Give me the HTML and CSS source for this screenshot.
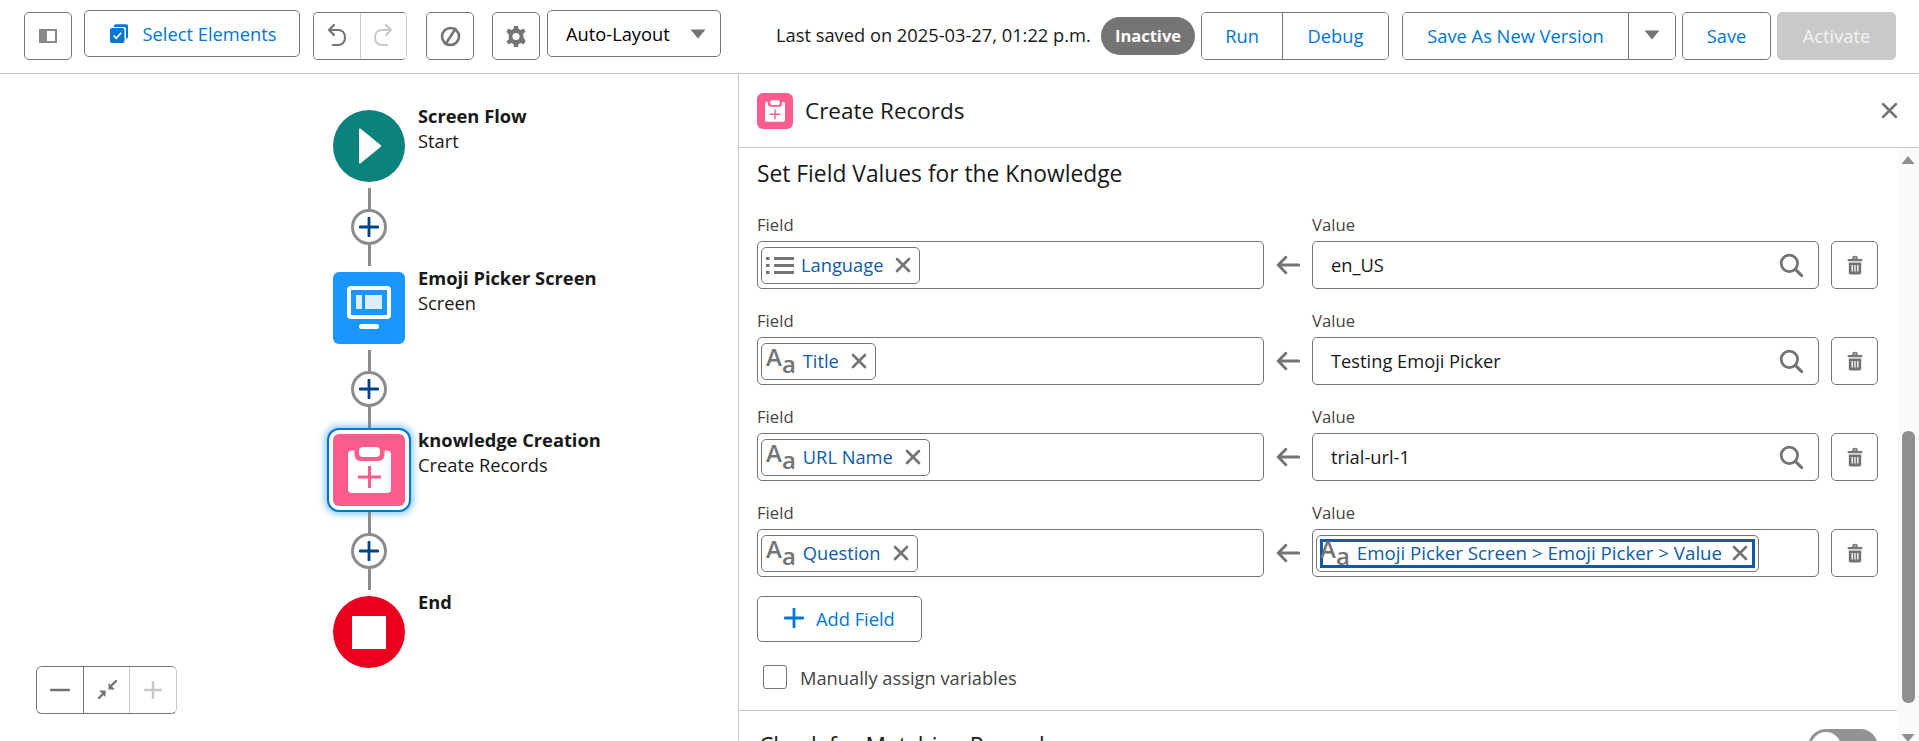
FILE: index.html
```html
<!DOCTYPE html>
<html lang="en">
<head>
    <meta charset="UTF-8">
    <title>Flow Builder - Create Records</title>
    <link rel="stylesheet" href="styles.css">
</head>
<body>
    <!-- shared icons -->
    <svg class="defs" width="0" height="0">
        <symbol id="i-x" viewBox="0 0 16 16"><path d="M2 2l12 12M14 2L2 14" fill="none" stroke="currentColor" stroke-width="2.6" stroke-linecap="round"/></symbol>
        <symbol id="i-caret" viewBox="0 0 16 10"><path d="M0.5 0.5h15L8 9.5z" fill="currentColor"/></symbol>
        <symbol id="i-plus" viewBox="0 0 20 20"><path d="M10 1v18M1 10h18" fill="none" stroke="currentColor" stroke-width="2.8" stroke-linecap="round"/></symbol>
        <symbol id="i-arrow" viewBox="0 0 22 18"><path d="M21 9H2M9 2L2 9l7 7" fill="none" stroke="currentColor" stroke-width="2.6" stroke-linecap="round" stroke-linejoin="round"/></symbol>
        <symbol id="i-search" viewBox="0 0 22 22"><circle cx="9.5" cy="9.5" r="7.5" fill="none" stroke="currentColor" stroke-width="2.6"/><path d="M15 15l6 6" stroke="currentColor" stroke-width="2.8" stroke-linecap="round"/></symbol>
        <symbol id="i-trash" viewBox="0 0 16 20"><path d="M6 2.5C6 1.2 10 1.2 10 2.5V4H6z" fill="none" stroke="currentColor" stroke-width="1.5"/><rect x="0.5" y="4" width="15" height="2.2" rx="1" fill="currentColor"/><path d="M1.8 7.5h12.4v10.3c0 1-.8 1.7-1.7 1.7h-9c-.9 0-1.7-.7-1.7-1.7z" fill="currentColor"/><path d="M5.2 10v6.5M8 10v6.5M10.8 10v6.5" stroke="#fff" stroke-width="1.3"/></symbol>
        <symbol id="i-clip" viewBox="0 0 43 46"><rect y="3.500" width="43" height="42.500" rx="4" fill="#fff"/><rect x="6.500" y="-4" width="30" height="18" rx="6" fill="#fe5c8c"/><rect x="11" y="0" width="21" height="10" rx="4" fill="#fff"/><path d="M21.500 19v22M10 30h23" stroke="#fe5c8c" stroke-width="3"/></symbol>
    </svg>

    <header class="toolbar">
        <button class="tool tool-panel">
            <svg width="18" height="14" viewBox="0 0 18 14"><rect x="1" y="1" width="16" height="12" fill="none" stroke="#8a8a8a" stroke-width="2"/><rect x="1" y="1" width="7" height="12" fill="#8a8a8a"/></svg>
        </button>
        <button class="tool tool-short tool-select">
            <svg width="18" height="19" viewBox="0 0 18 19"><path d="M4 3V2c0-1 .7-1.700 1.700-1.700h10.600C17.300.3 18 1 18 2v11c0 1-.7 1.700-1.700 1.700H16V5c0-1-1-2-2-2z" fill="#0176d3"/><rect y="4" width="14.500" height="15" rx="2" fill="#0176d3"/><path d="M3.500 11.500l2.700 2.700 5-5.500" fill="none" stroke="#fff" stroke-width="1.700"/></svg>
            Select Elements
        </button>
        <div class="group group-undo">
            <button class="group-btn">
                <svg width="20" height="23" viewBox="0 0 20 23"><path d="M7 1L2 6l5 5M2 6h9c4 0 7 3 7 7.500S15 21 11 21H6" fill="none" stroke="#747474" stroke-width="2.200" stroke-linecap="round" stroke-linejoin="round"/></svg>
            </button>
            <button class="group-btn is-off">
                <svg width="20" height="23" viewBox="0 0 20 23"><path d="M13 1l5 5-5 5M18 6H9c-4 0-7 3-7 7.500S5 21 9 21h5" fill="none" stroke="#c9c9c9" stroke-width="2.200" stroke-linecap="round" stroke-linejoin="round"/></svg>
            </button>
        </div>
        <button class="tool tool-block">
            <svg width="21" height="23" viewBox="0 0 21 23"><circle cx="10.500" cy="11.500" r="8.500" fill="none" stroke="#747474" stroke-width="2.600"/><path d="M16 3L5 20" stroke="#747474" stroke-width="2.600"/></svg>
        </button>
        <button class="tool tool-gear">
            <svg width="20" height="21" viewBox="0 0 20 21"><path d="M8 0h4l.6 3 2.300 1 2.600-1.600 2 3.400L17.200 7.700v2.600L19.500 15.200l-2 3.400-2.600-1.600-2.300 1L12 21H8l-.6-3-2.300-1-2.600 1.600-2-3.400 2.300-2V8.800L.5 5.800l2-3.400L5.100 4l2.300-1z" fill="#747474"/><circle cx="10" cy="10.500" r="3.600" fill="#fff"/></svg>
        </button>
        <button class="tool tool-short tool-layout">
            <span>Auto-Layout</span>
            <svg class="caret" width="16" height="10"><use href="#i-caret"/></svg>
        </button>

        <div class="saved">Last saved on 2025-03-27, 01:22 p.m.</div>
        <span class="badge">Inactive</span>
        <div class="group group-run">
            <button class="group-btn btn-run">Run</button>
            <button class="group-btn btn-debug">Debug</button>
        </div>
        <div class="group group-save">
            <button class="group-btn btn-saveas">Save As New Version</button>
            <button class="group-btn btn-more"><svg class="caret" width="16" height="10"><use href="#i-caret"/></svg></button>
        </div>
        <button class="action btn-save">Save</button>
        <button class="action btn-activate">Activate</button>
    </header>

    <main class="main">
        <section class="canvas">
            <div class="flow">
                <div class="node">
                    <div class="node-icon node-start">
                        <svg width="24" height="36" viewBox="0 0 24 36"><path d="M1 1.500c0-.9 1-1.300 1.600-.7l20.300 16.400c.5.400.5 1.200 0 1.600L2.600 35.200c-.6.600-1.600.2-1.600-.7z" fill="#fff"/></svg>
                    </div>
                    <div class="node-text"><strong>Screen Flow</strong><span>Start</span></div>
                </div>
                <div class="connector"><i></i><button class="plus"><svg width="20" height="20"><use href="#i-plus"/></svg></button><i></i></div>
                <div class="node">
                    <div class="node-icon node-screen">
                        <svg width="44" height="44" viewBox="0 0 44 44"><rect x="2" y="2" width="40" height="29" rx="2" fill="none" stroke="#fff" stroke-width="4"/><rect x="9" y="9" width="6" height="14" fill="#fff" opacity=".85"/><rect x="18" y="9" width="17" height="14" fill="#fff" opacity=".85"/><rect x="12" y="38" width="20" height="5" rx="2.500" fill="#fff"/></svg>
                    </div>
                    <div class="node-text"><strong>Emoji Picker Screen</strong><span>Screen</span></div>
                </div>
                <div class="connector"><i></i><button class="plus"><svg width="20" height="20"><use href="#i-plus"/></svg></button><i></i></div>
                <div class="node">
                    <div class="node-icon node-create is-selected">
                        <svg width="43" height="46"><use href="#i-clip"/></svg>
                    </div>
                    <div class="node-text"><strong>knowledge Creation</strong><span>Create Records</span></div>
                </div>
                <div class="connector"><i></i><button class="plus"><svg width="20" height="20"><use href="#i-plus"/></svg></button><i></i></div>
                <div class="node">
                    <div class="node-icon node-end"><b class="stop"></b></div>
                    <div class="node-text"><strong>End</strong></div>
                </div>
            </div>

            <div class="zoomer">
                <button class="zoom-btn"><svg width="20" height="4"><path d="M1 2h18" stroke="#747474" stroke-width="2.400" stroke-linecap="round"/></svg></button>
                <button class="zoom-btn">
                    <svg width="20" height="20" viewBox="0 0 20 20"><path d="M19 1l-5.500 5.500M2 18l5.500-5.500" stroke="#747474" stroke-width="2.400" stroke-linecap="round"/><path d="M11.500 3v6.500H18zM8.500 17v-6.500H2z" fill="#747474"/></svg>
                </button>
                <button class="zoom-btn is-off"><svg width="18" height="18"><use href="#i-plus"/></svg></button>
            </div>
        </section>

        <aside class="panel">
            <div class="panel-head">
                <div class="panel-icon"><svg width="20" height="22"><use href="#i-clip"/></svg></div>
                <h2>Create Records</h2>
                <button class="panel-close"><svg width="17" height="17"><use href="#i-x"/></svg></button>
            </div>
            <div class="panel-body">
                <div class="panel-scroll">
                    <h3 class="section-title">Set Field Values for the Knowledge</h3>

                    <div class="map-row">
                        <div class="map-col">
                            <label>Field</label>
                            <div class="box">
                                <span class="pill">
                                    <svg class="list-icon" width="28" height="19" viewBox="0 0 28 19"><path d="M8 2.500h20M8 9.500h20M8 16.500h20" stroke="#747474" stroke-width="3"/><path d="M0 2.500h3.500M0 9.500h3.500M0 16.500h3.500" stroke="#747474" stroke-width="3"/></svg>
                                    <span class="pill-text">Language</span>
                                    <svg class="pill-x" width="16" height="16"><use href="#i-x"/></svg>
                                </span>
                            </div>
                        </div>
                        <svg class="map-arrow" width="22" height="18"><use href="#i-arrow"/></svg>
                        <div class="map-col">
                            <label>Value</label>
                            <div class="box box-value">
                                <span class="value-text">en_US</span>
                                <svg class="search" width="24" height="24"><use href="#i-search"/></svg>
                            </div>
                        </div>
                        <button class="trash"><svg width="16" height="20"><use href="#i-trash"/></svg></button>
                    </div>

                    <div class="map-row">
                        <div class="map-col">
                            <label>Field</label>
                            <div class="box">
                                <span class="pill">
                                    <span class="aa"><span>A</span><span class="aa-low">a</span></span>
                                    <span class="pill-text">Title</span>
                                    <svg class="pill-x" width="16" height="16"><use href="#i-x"/></svg>
                                </span>
                            </div>
                        </div>
                        <svg class="map-arrow" width="22" height="18"><use href="#i-arrow"/></svg>
                        <div class="map-col">
                            <label>Value</label>
                            <div class="box box-value">
                                <span class="value-text">Testing Emoji Picker</span>
                                <svg class="search" width="24" height="24"><use href="#i-search"/></svg>
                            </div>
                        </div>
                        <button class="trash"><svg width="16" height="20"><use href="#i-trash"/></svg></button>
                    </div>

                    <div class="map-row">
                        <div class="map-col">
                            <label>Field</label>
                            <div class="box">
                                <span class="pill">
                                    <span class="aa"><span>A</span><span class="aa-low">a</span></span>
                                    <span class="pill-text">URL Name</span>
                                    <svg class="pill-x" width="16" height="16"><use href="#i-x"/></svg>
                                </span>
                            </div>
                        </div>
                        <svg class="map-arrow" width="22" height="18"><use href="#i-arrow"/></svg>
                        <div class="map-col">
                            <label>Value</label>
                            <div class="box box-value">
                                <span class="value-text">trial-url-1</span>
                                <svg class="search" width="24" height="24"><use href="#i-search"/></svg>
                            </div>
                        </div>
                        <button class="trash"><svg width="16" height="20"><use href="#i-trash"/></svg></button>
                    </div>

                    <div class="map-row">
                        <div class="map-col">
                            <label>Field</label>
                            <div class="box">
                                <span class="pill">
                                    <span class="aa"><span>A</span><span class="aa-low">a</span></span>
                                    <span class="pill-text">Question</span>
                                    <svg class="pill-x" width="16" height="16"><use href="#i-x"/></svg>
                                </span>
                            </div>
                        </div>
                        <svg class="map-arrow" width="22" height="18"><use href="#i-arrow"/></svg>
                        <div class="map-col">
                            <label>Value</label>
                            <div class="box">
                                <span class="pill pill-focus">
                                    <span class="focus-ring">
                                        <span class="aa"><span>A</span><span class="aa-low">a</span></span>
                                        <span class="pill-text">Emoji Picker Screen &gt; Emoji Picker &gt; Value</span>
                                        <svg class="pill-x" width="16" height="16"><use href="#i-x"/></svg>
                                    </span>
                                </span>
                            </div>
                        </div>
                        <button class="trash"><svg width="16" height="20"><use href="#i-trash"/></svg></button>
                    </div>

                    <button class="add-field"><svg width="20" height="20"><use href="#i-plus"/></svg>Add Field</button>

                    <div class="check-row">
                        <span class="checkbox"></span>
                        <span>Manually assign variables</span>
                    </div>

                    <div class="next-section">
                        <h3 class="section-title">Check for Matching Records</h3>
                        <span class="toggle"><b></b></span>
                    </div>
                </div>

                <div class="scrollbar">
                    <svg class="scroll-up" width="14" height="10" viewBox="0 0 16 10"><path d="M8 .5l7.500 9H.5z" fill="#8f8f8f"/></svg>
                    <div class="scroll-thumb"></div>
                    <svg class="scroll-down" width="14" height="10" viewBox="0 0 16 10"><path d="M.5.5h15L8 9.500z" fill="#8f8f8f"/></svg>
                </div>
            </div>
        </aside>
    </main>
</body>
</html>
```

FILE: styles.css
```css
* {
    box-sizing: border-box;
}
html, body {
    height: 741px;
    overflow: hidden;
}
body {
    margin: 0;
    font-family: 'Open Sans', sans-serif;
    font-size: 18.3px;
    color: #181818;
    background: #fff;
}
button {
    font: inherit;
    background: #fff;
    cursor: pointer;
    padding: 0;
}
.defs {
    position: absolute;
}

/* toolbar */
.toolbar {
    display: flex;
    align-items: flex-start;
    height: 74px;
    padding: 12px 0 0 24px;
    border-bottom: 1px solid #c9c9c9;
}
.tool {
    display: flex;
    align-items: center;
    justify-content: center;
    width: 48px;
    height: 48px;
    border: 1px solid #747474;
    border-radius: 5px;
}
.tool-short {
    height: 47px;
    margin-top: -2px;
}
.tool-select {
    width: 216px;
    margin-left: 12px;
    gap: 15px;
    padding-left: 2px;
    color: #0176d3;
}
.tool-block {
    margin-left: 19px;
}
.tool-gear {
    margin-left: 18px;
}
.tool-layout {
    width: 174px;
    margin-left: 7px;
    justify-content: space-between;
    padding: 0 14px 0 18px;
}
.caret {
    color: #747474;
}
.group {
    display: flex;
    height: 48px;
    border: 1px solid #747474;
    border-radius: 5px;
    overflow: hidden;
}
.group-btn {
    border: none;
    border-left: 1px solid #747474;
    color: #0176d3;
    display: flex;
    align-items: center;
    justify-content: center;
    padding-bottom: 2px;
}
.group-btn:first-child {
    border-left: none;
}
.group-undo {
    width: 94px;
    margin-left: 13px;
    border-right-color: #c9c9c9;
}
.group-undo .group-btn {
    width: 47px;
}
.group-btn.is-off {
    border-left-color: #c9c9c9;
}
.saved {
    width: 318px;
    margin-left: 55px;
    line-height: 46px;
    white-space: nowrap;
}
.badge {
    width: 94px;
    height: 38px;
    margin: 5px 0 0 7px;
    border-radius: 19px;
    background: #747474;
    color: #fff;
    font-size: 16.5px;
    font-weight: 700;
    line-height: 37px;
    text-align: center;
}
.group-run {
    width: 188px;
    margin-left: 6px;
}
.btn-run {
    width: 80px;
}
.btn-debug {
    flex: 1;
}
.group-save {
    width: 274px;
    margin-left: 13px;
}
.btn-saveas {
    width: 225px;
}
.btn-more {
    flex: 1;
}
.action {
    height: 48px;
    margin-left: 6px;
    padding-bottom: 2px;
    border: 1px solid #747474;
    border-radius: 5px;
    color: #0176d3;
}
.btn-save {
    width: 89px;
}
.btn-activate {
    width: 119px;
    background: #c9c9c9;
    border-color: #c9c9c9;
    color: #f3f3f3;
}

/* flow canvas */
.main {
    display: flex;
    height: 667px;
}
.canvas {
    position: relative;
    width: 738px;
    flex-shrink: 0;
}
.flow {
    padding: 36px 0 0 333px;
}
.node {
    display: flex;
    height: 72px;
    gap: 13px;
}
.node-icon {
    display: flex;
    align-items: center;
    justify-content: center;
    width: 72px;
    height: 72px;
    flex-shrink: 0;
    border-radius: 6px;
}
.node-start {
    background: #0b827c;
    border-radius: 50%;
    padding-left: 1px;
}
.node-screen {
    background: #1b96ff;
}
.node-create {
    background: #fe5c8c;
}
.node-end {
    background: #ea001e;
    border-radius: 50%;
}
.stop {
    width: 34px;
    height: 33px;
    background: #fff;
}
.is-selected {
    box-shadow: 0 0 0 4px #fff, 0 0 0 6px #0176d3, 0 0 7px 8px rgba(27, 150, 255, 0.55);
}
.node-text {
    display: flex;
    flex-direction: column;
    margin-top: -6px;
    line-height: 24.5px;
    white-space: nowrap;
}
.node-text strong {
    font-weight: 700;
}
.connector {
    display: flex;
    flex-direction: column;
    align-items: center;
    width: 72px;
    height: 78px;
    margin: 6px 0;
}
.connector i {
    flex: 1;
    width: 3px;
    background: #8c8c8c;
}
.plus {
    display: flex;
    align-items: center;
    justify-content: center;
    width: 36px;
    height: 36px;
    border: 3px solid #8c8c8c;
    border-radius: 50%;
    color: #014486;
}
.zoomer {
    position: absolute;
    left: 36px;
    top: 592px;
    display: flex;
    width: 141px;
    height: 48px;
    border: 1px solid #747474;
    border-right-color: #c9c9c9;
    border-radius: 6px;
    overflow: hidden;
}
.zoom-btn {
    display: flex;
    align-items: center;
    justify-content: center;
    width: 46px;
    border: none;
    border-left: 1px solid #747474;
    color: #c9c9c9;
}
.zoom-btn:first-child {
    border-left: none;
}
.zoom-btn.is-off {
    flex: 1;
    border-left-color: #c9c9c9;
}

/* side panel */
.panel {
    flex: 1;
    display: flex;
    flex-direction: column;
    min-width: 0;
    border-left: 1px solid #c9c9c9;
}
.panel-head {
    display: flex;
    align-items: center;
    height: 74px;
    flex-shrink: 0;
    padding: 0 21px 0 18px;
    border-bottom: 1px solid #c9c9c9;
}
.panel-icon {
    display: flex;
    align-items: center;
    justify-content: center;
    width: 36px;
    height: 36px;
    border-radius: 6px;
    background: #fe5c8c;
}
.panel-head h2 {
    margin: 0 0 0 12px;
    font-size: 22.5px;
    font-weight: 400;
}
.panel-close {
    margin-left: auto;
    border: none;
    color: #747474;
    display: flex;
}
.panel-body {
    flex: 1;
    display: flex;
    min-height: 0;
}
.panel-scroll {
    flex: 1;
    min-width: 0;
    padding: 11px 19px 0 18px;
    overflow: hidden;
}
.section-title {
    margin: 0 0 26px;
    font-size: 22.8px;
    font-weight: 400;
    line-height: 30px;
    white-space: nowrap;
}
.map-row {
    display: flex;
    align-items: flex-end;
    margin-bottom: 22px;
}
.map-col {
    width: 507px;
    flex-shrink: 0;
}
.map-col label {
    display: block;
    height: 26px;
    font-size: 16.7px;
    line-height: 20px;
    color: #444;
}
.map-arrow {
    width: 48px;
    height: 48px;
    padding: 14px 12px;
    color: #747474;
}
.box {
    display: flex;
    align-items: center;
    height: 48px;
    padding: 0 3px;
    border: 1px solid #747474;
    border-radius: 5px;
}
.box-value {
    justify-content: space-between;
    padding: 0 15px 0 18px;
}
.value-text {
    margin-bottom: 2px;
}
.search {
    color: #747474;
}
.pill {
    display: inline-flex;
    align-items: center;
    height: 37px;
    padding: 0 8px 0 4px;
    border: 1px solid #747474;
    border-radius: 5px;
    color: #0b5cab;
}
.pill-text {
    margin: 0 0 2px 7px;
    white-space: nowrap;
}
.pill-x {
    margin-left: 12px;
    color: #747474;
}
.list-icon {
    flex-shrink: 0;
}
.aa {
    display: flex;
    height: 32px;
    color: #747474;
    font-weight: 600;
    line-height: 1;
    font-size: 24px;
}
.aa-low {
    margin-top: 7px;
    font-size: 24px;
}
.pill-focus {
    padding: 0 3px;
    height: 37px;
}
.focus-ring {
    display: flex;
    align-items: center;
    width: 435px;
    height: 29px;
    border: 3px solid #0b5cab;
}
.focus-ring .aa {
    margin-left: -3px;
}
.focus-ring .pill-text {
    font-size: 18.7px;
}
.focus-ring .pill-x {
    margin-left: 10px;
}
.trash {
    display: flex;
    align-items: center;
    justify-content: center;
    width: 47px;
    height: 48px;
    margin-left: 12px;
    border: 1px solid #747474;
    border-radius: 5px;
    color: #747474;
}
.add-field {
    display: flex;
    align-items: center;
    gap: 12px;
    width: 165px;
    height: 46px;
    margin-top: -3px;
    padding: 0 0 2px 26px;
    border: 1px solid #747474;
    border-radius: 5px;
    color: #0176d3;
}
.check-row {
    display: flex;
    align-items: center;
    gap: 13px;
    height: 24px;
    margin: 23px 0 0 6px;
    color: #444;
}
.checkbox {
    width: 24px;
    height: 24px;
    border: 1px solid #747474;
    border-radius: 3px;
}
.next-section {
    display: flex;
    justify-content: space-between;
    margin: 21px -19px 0 -18px;
    padding: 20px 19px 0 20px;
    border-top: 1px solid #c9c9c9;
}
.toggle {
    display: flex;
    align-items: center;
    flex-shrink: 0;
    width: 70px;
    height: 36px;
    margin-top: -2px;
    padding-left: 3px;
    border-radius: 18px;
    background: #939393;
}
.toggle b {
    width: 30px;
    height: 30px;
    border-radius: 50%;
    background: #fff;
}
.scrollbar {
    display: flex;
    flex-direction: column;
    align-items: center;
    width: 22px;
    flex-shrink: 0;
    background: #fafafa;
}
.scroll-up {
    margin-top: 7px;
    flex-shrink: 0;
}
.scroll-thumb {
    width: 13px;
    height: 272px;
    margin-top: 266px;
    flex-shrink: 0;
    border-radius: 6px;
    background: #8f8f8f;
}
.scroll-down {
    margin-top: 30px;
    flex-shrink: 0;
}
```
